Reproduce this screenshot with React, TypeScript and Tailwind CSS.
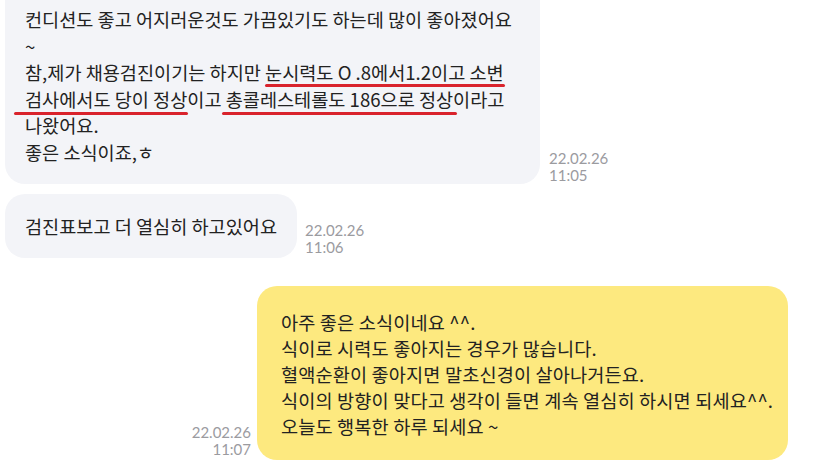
import * as React from 'react';

const KR = '[font-family:"Noto_Sans_CJK_KR","Noto_Sans",sans-serif]';

const Stamp: React.FC<{ date: string; time: string; right?: boolean }> = ({ date, time, right }) => (
  <div className={`text-[15px] leading-[17px] text-[#9b9b9f] [font-family:Lato,"Noto_Sans",sans-serif] ${right ? 'text-right' : ''}`}>
    <div>{date}</div>
    <div>{time}</div>
  </div>
);

const first = [
  '컨디션도 좋고 어지러운것도 가끔있기도 하는데 많이 좋아졌어요',
  '~',
  '참,제가 채용검진이기는 하지만 눈시력도 O .8에서1.2이고 소변',
  '검사에서도 당이 정상이고 총콜레스테롤도 186으로 정상이라고',
  '나왔어요.',
  '좋은 소식이죠,ㅎ',
];

const reply = [
  '아주 좋은 소식이네요 ^^.',
  '식이로 시력도 좋아지는 경우가 많습니다.',
  '혈액순환이 좋아지면 말초신경이 살아나거든요.',
  '식이의 방향이 맞다고 생각이 들면 계속 열심히 하시면 되세요^^.',
  '오늘도 행복한 하루 되세요 ~',
];

export default function App() {
  return (
    <div className={`relative w-[821px] h-[467px] overflow-hidden bg-white text-[#222] ${KR}`}>
      <div className="flex flex-col pl-[5px]">
        {/* received */}
        <div className="flex items-end gap-[9px]">
          <div className="w-[535px] bg-[#f3f4f8] rounded-b-[20px] pl-[20px] pr-[10px] pt-[6px] pb-[19px] text-[18.6px] leading-[26.5px]">
            {first.map((l, i) => (
              <div key={i} className="whitespace-nowrap">{l}</div>
            ))}
          </div>
          <Stamp date="22.02.26" time="11:05" />
        </div>

        <div className="flex items-end gap-[8px] mt-[10px]">
          <div className="bg-[#f3f4f8] rounded-[20px] px-[20px] py-[19px] text-[18.6px] leading-[26px] whitespace-nowrap">
            검진표보고 더 열심히 하고있어요
          </div>
          <div className="pb-[2px]">
            <Stamp date="22.02.26" time="11:06" />
          </div>
        </div>

        {/* sent */}
        <div className="flex items-end justify-end gap-[6px] mt-[28px] pr-[33px]">
          <div className="pb-[2px]">
            <Stamp date="22.02.26" time="11:07" right />
          </div>
          <div className="w-[531px] bg-[#fde97f] rounded-[20px] pl-[24px] pr-[4px] pt-[23px] pb-[21px] text-[18.6px] leading-[26px] tracking-[0.15px]">
            {reply.map((l, i) => (
              <div key={i} className="whitespace-nowrap">{l}</div>
            ))}
          </div>
        </div>
      </div>

      {/* red annotation underlines */}
      <div className="absolute left-[265px] top-[84px] w-[240px] h-[3px] rounded-full bg-[#d9232c]" />
      <div className="absolute left-[14px] top-[112px] w-[174px] h-[3px] rounded-full bg-[#d9232c]" />
      <div className="absolute left-[222px] top-[112px] w-[235px] h-[3px] rounded-full bg-[#d9232c]" />
    </div>
  );
}
